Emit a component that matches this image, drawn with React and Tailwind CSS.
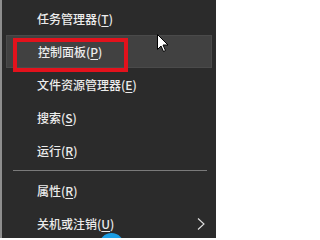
import React from "react";

const items = [
  { label: "任务管理器", key: "T" },
  { label: "控制面板", key: "P", active: true },
  { label: "文件资源管理器", key: "E" },
  { label: "搜索", key: "S" },
  { label: "运行", key: "R" },
];
const items2 = [
  { label: "属性", key: "R" },
  { label: "关机或注销", key: "U", sub: true },
];

function Row({ it }) {
  return (
    <div
      className={
        "h-[33px] mx-[4px] pl-[31px] pr-[6px] flex items-center justify-between text-[12px] font-medium text-[#ececec] " +
        (it.active ? "bg-[#414141] border border-[#4a4a4a] pl-[30px]" : "")
      }
    >
      <span>
        {it.label}(<span className="underline underline-offset-2">{it.key}</span>)
      </span>
      {it.sub && (
        <svg width="8" height="12" viewBox="0 0 8 12" className="mr-[1px]">
          <path d="M1 0.5 L7 6 L1 11.5" fill="none" stroke="#e0e0e0" strokeWidth="1.1" />
        </svg>
      )}
    </div>
  );
}

export default function App() {
  return (
    <div
      className="relative w-[216px] h-[238px] overflow-hidden flex bg-[#2b2b2b]"
      style={{ fontFamily: '"Noto Sans CJK SC", "Noto Sans", sans-serif' }}
    >
      <div className="w-[2px] bg-[#8e8e8e]" />
      <div className="flex-1 pt-[2px]">
        {items.map((it, i) => (
          <Row key={i} it={it} />
        ))}
        <div className="mt-[3px] mb-[3px] ml-[11px] mr-[9px] h-px bg-[#7a7a7a]" />
        {items2.map((it, i) => (
          <Row key={i} it={it} />
        ))}
      </div>

      {/* red highlight box */}
      <div className="absolute left-[13px] top-[38px] w-[115px] h-[34px] border-[4px] border-[#e3121c]" />

      {/* mouse cursor */}
      <svg className="absolute left-[157px] top-[34px]" width="12" height="19" viewBox="0 0 12 19">
        <path d="M0.5 0.5 L0.5 15.5 L4 12 L6.5 17.5 L8.5 16.5 L6 11 L11 11 Z" fill="#ffffff" stroke="#000000" strokeWidth="1" strokeLinejoin="round" />
      </svg>

      {/* blue circle */}
      <div className="absolute left-[99px] top-[233px] w-[25px] h-[25px] rounded-full bg-[#1a9ee3]" />
    </div>
  );
}
